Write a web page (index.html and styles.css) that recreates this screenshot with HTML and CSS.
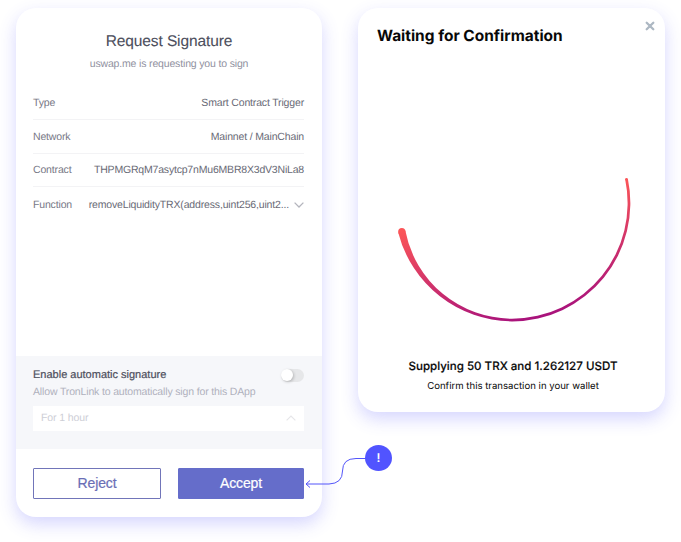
FILE: index.html
```html
<!DOCTYPE html>
<html lang="en">
<head>
<meta charset="utf-8">
<title>Request Signature</title>
<link rel="stylesheet" href="styles.css">
</head>
<body>
<main class="stage">
  <section class="card signature">
    <header class="signature-head">
      <h1>Request Signature</h1>
      <p>uswap.me is requesting you to sign</p>
    </header>
    <dl class="details">
      <div class="row"><dt>Type</dt><dd>Smart Contract Trigger</dd></div>
      <div class="row"><dt>Network</dt><dd>Mainnet / MainChain</dd></div>
      <div class="row"><dt>Contract</dt><dd class="address">THPMGRqM7asytcp7nMu6MBR8X3dV3NiLa8</dd></div>
      <div class="row"><dt>Function</dt><dd class="func"><span>removeLiquidityTRX(address,uint256,uint2...</span><svg width="10" height="6" viewBox="0 0 10 6"><path d="M.6.6 5 5 9.400.6" fill="none" stroke="#b4b5bd" stroke-width="1.3"/></svg></dd></div>
    </dl>
    <div class="auto">
      <div class="auto-head"><h2>Enable automatic signature</h2><span class="toggle"><i></i></span></div>
      <p>Allow TronLink to automatically sign for this DApp</p>
      <div class="select"><span>For 1 hour</span><svg width="10" height="6" viewBox="0 0 10 6"><path d="M.6 5.400 5 1 9.400 5.400" fill="none" stroke="#e6e6e9" stroke-width="1.200"/></svg></div>
    </div>
    <footer class="actions">
      <button class="btn reject">Reject</button>
      <button class="btn accept">Accept</button>
    </footer>
  </section>

  <section class="card waiting">
    <header class="waiting-head">
      <h2>Waiting for Confirmation</h2>
      <svg class="close" width="10" height="10" viewBox="0 0 10 10"><path d="M1.700 1.700 8.300 8.300M8.300 1.700 1.700 8.300" stroke="#adb8c3" stroke-width="2.300" stroke-linecap="round"/></svg>
    </header>
    <svg class="spinner" width="240" height="150" viewBox="394 175 240 150">
      <defs>
        <linearGradient id="sweep" gradientUnits="userSpaceOnUse" x1="514" y1="205" x2="540" y2="318">
          <stop offset="0" stop-color="#fb5558"/>
          <stop offset="1" stop-color="#a8127c"/>
        </linearGradient>
      </defs>
      <g fill="url(#sweep)">
        <path d="M398.200 232.400A118 118 0 0 0 512 321.400A118.400 118.400 0 0 0 627.900 179L625.200 179.500A115.700 115.700 0 0 1 512 318.700A108.500 108.500 0 0 1 405.300 230.600Z"/>
        <circle cx="401.800" cy="231.500" r="3.600"/>
        <circle cx="626.500" cy="179.300" r="1.400"/>
      </g>
    </svg>
    <p class="supplying">Supplying 50 TRX and 1.262127 USDT</p>
    <p class="confirm">Confirm this transaction in your wallet</p>
  </section>

  <svg class="connector" width="90" height="46" viewBox="303 444 90 46">
    <path d="M366 458.500H356Q342.500 458.500 342.500 471T329 484H306.500M310 480.500 306 484 310 487.500" fill="none" stroke="#5355fa" stroke-width="1"/>
  </svg>
  <span class="marker">!</span>
</main>
</body>
</html>
```

FILE: styles.css
```css
* { box-sizing: border-box; }
body {
  margin: 0;
  background: #fff;
  font-family: "Liberation Sans", Arial, sans-serif;
  text-rendering: geometricPrecision;
}
h1, h2, p, dl, dd { margin: 0; }
svg { display: block; }

.stage {
  position: relative;
  display: flex;
  align-items: flex-start;
  gap: 36px;
  width: 681px;
  height: 542px;
  padding: 8px 16px;
  overflow: hidden;
}
.card {
  display: flex;
  flex-direction: column;
  border-radius: 20px;
  background: #fff;
  box-shadow: 0 7px 17px rgba(83, 85, 250, .24);
}

.signature { width: 306px; height: 509px; }
.signature-head { padding-top: 24px; text-align: center; }
.signature-head h1 {
  font-size: 15.500px;
  line-height: 20px;
  font-weight: 400;
  letter-spacing: -.1px;
  color: #4d4f5d;
  -webkit-text-stroke: .1px;
}
.signature-head p { margin-top: 5px; font-size: 10.500px; line-height: 14px; letter-spacing: -.16px; color: #9091a0; }
.details { margin: 15px 18px 0 17px; }
.row {
  display: flex;
  justify-content: space-between;
  align-items: center;
  height: 33.800px;
  padding-top: 1px;
  border-bottom: 1px solid #f3f3f5;
  font-size: 10.500px;
  letter-spacing: -.16px;
  color: #777886;
}
.row:last-child { border-bottom: 0; }
.row dd { color: #696a76; white-space: nowrap; }
.row .address { letter-spacing: -.19px; }
.func { display: flex; align-items: center; gap: 5px; }
.auto {
  height: 93px;
  margin-top: auto;
  padding: 10px 18px 0 17px;
  background: #f6f7fa;
}
.auto-head { display: flex; justify-content: space-between; align-items: center; height: 17px; }
.auto-head h2 { font-size: 11px; font-weight: 400; color: #4d4f5d; -webkit-text-stroke: .2px; }
.toggle { width: 23px; height: 13px; margin-top: 2px; border-radius: 7px; background: #e6e7e9; }
.toggle i {
  display: block;
  width: 12px;
  height: 12px;
  border-radius: 50%;
  background: #fff;
  box-shadow: 1px 1px 3px rgba(0, 0, 0, .22);
}
.auto p { margin-top: 2px; font-size: 10.500px; line-height: 14px; letter-spacing: -.15px; color: #b0b1bd; }
.select {
  display: flex;
  justify-content: space-between;
  align-items: center;
  height: 25px;
  margin-top: 7px;
  padding: 0 8px 1px;
  background: #fff;
  font-size: 10.500px;
  letter-spacing: -.1px;
  color: #cdced6;
}
.actions {
  display: grid;
  grid-template-columns: 128px 126px;
  gap: 17px;
  height: 68px;
  padding: 19px 18px 18px 17px;
}
.btn {
  height: 31px;
  padding: 0 0 2px;
  border: 1px solid #7175b9;
  border-radius: 1px;
  background: #fff;
  font-family: inherit;
  font-size: 14px;
  letter-spacing: -.15px;
  color: #6a6eb6;
  -webkit-text-stroke: .2px;
}
.accept { border-color: #656dca; background: #656dca; color: #fff; }

.waiting { width: 307px; height: 404px; align-items: center; font-family: Inter, sans-serif; color: #080808; }
.waiting-head {
  display: flex;
  justify-content: space-between;
  align-self: stretch;
  padding: 13px 10px 0 19px;
}
.waiting-head h2 { margin-top: 4px; font-size: 15.450px; line-height: 21px; font-weight: 700; }
.spinner { margin: 129px 0 0 4px; }
.supplying { margin: 33px 0 0 3px; font-size: 11.550px; line-height: 16px; font-weight: 500; -webkit-text-stroke: .15px; }
.confirm { margin: 6px 0 0 3px; font-size: 9.600px; line-height: 14px; }

.connector { position: absolute; left: 303px; top: 444px; }
.marker {
  position: absolute;
  left: 365px;
  top: 445px;
  width: 27px;
  height: 26px;
  border-radius: 50%;
  background: #5154ff;
  color: #fff;
  font: 600 12px/26px Inter, sans-serif;
  text-align: center;
}
```
